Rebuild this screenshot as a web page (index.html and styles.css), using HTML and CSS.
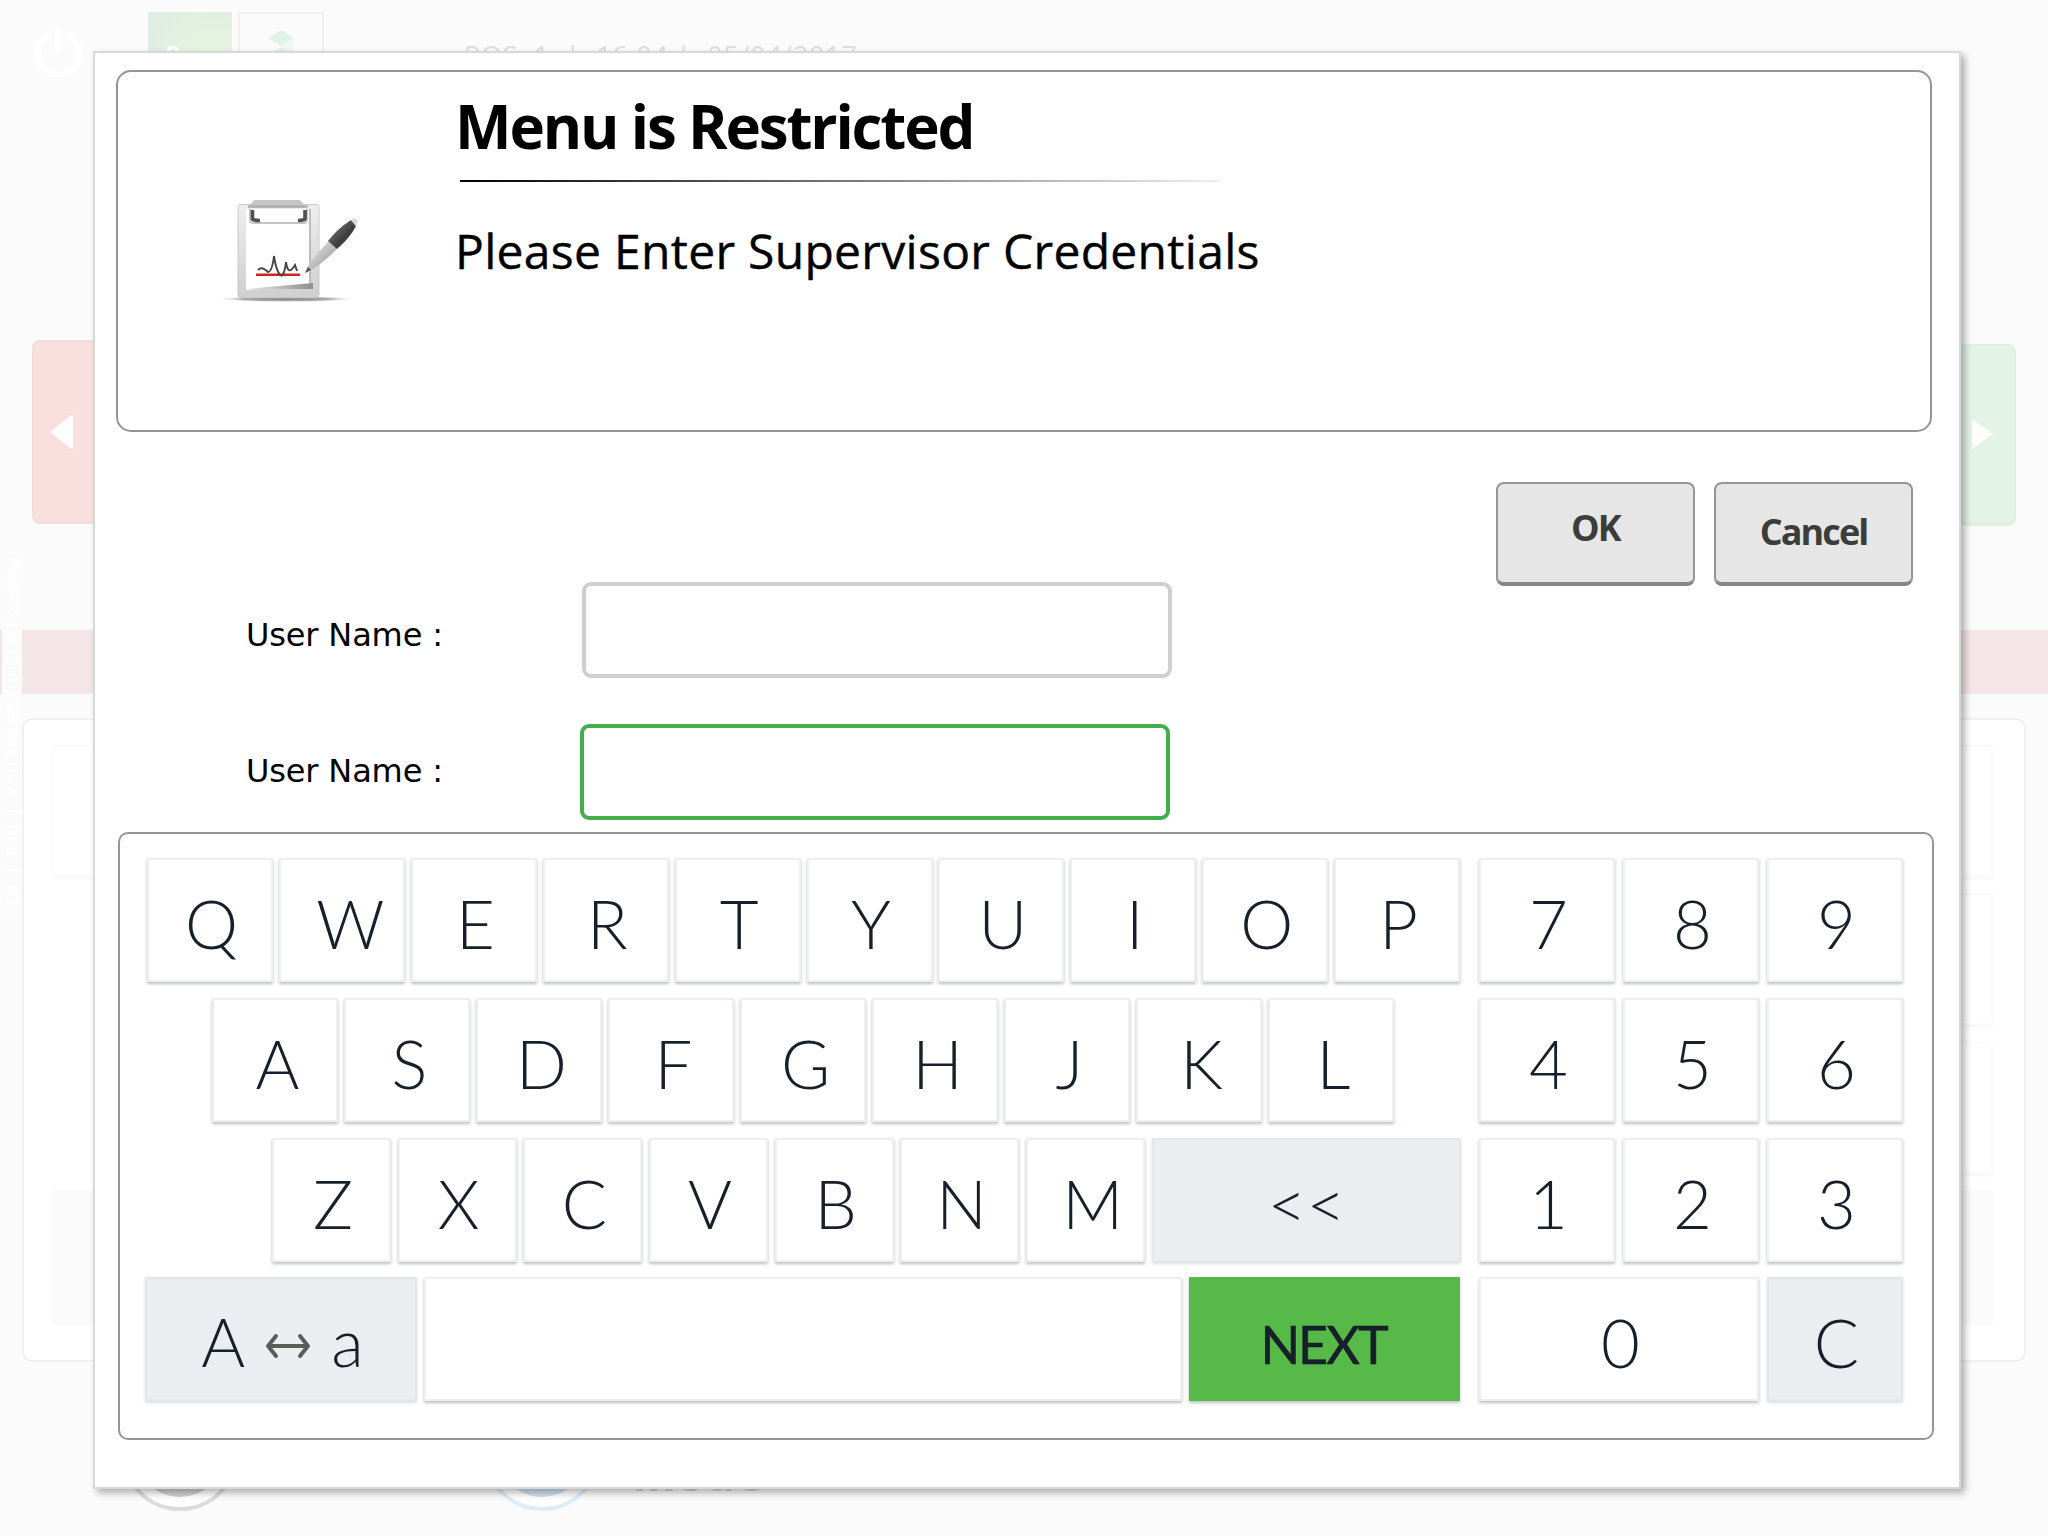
FILE: index.html
```html
<!DOCTYPE html>
<html lang="en">
<head>
<meta charset="utf-8">
<title>Menu is Restricted</title>
<link rel="stylesheet" href="styles.css">
</head>
<body>
<div class="app">
  <header class="topbar">
    <svg class="power" width="50" height="50" viewBox="0 0 50 50"><path d="M15 9A21 21 0 1 0 35 9M25 3V22" fill="none" stroke="#fff" stroke-width="7" stroke-linecap="round"/></svg>
    <div class="brand brand-green">&amp;<small>me</small></div>
    <div class="brand brand-white"><svg width="30" height="42" viewBox="0 0 30 42"><path d="M15 0L28 8L15 16L2 8Z" fill="#e2f2e7"/><path d="M15 16L28 8V22L15 30Z" fill="#eff8f1"/><path d="M15 17L26 24L15 32L4 24Z" fill="#e2f2e7"/></svg></div>
    <div class="status">POS: 1&nbsp; |&nbsp; 16:04 |&nbsp; 05/04/2017</div>
  </header>
  <nav class="pager">
    <div class="page prev"><svg width="23" height="36" viewBox="0 0 23 36"><path d="M0 18L23 0V36Z" fill="#fff"/></svg></div>
    <div class="page next"><svg width="21" height="30" viewBox="0 0 21 30"><path d="M21 15L0 0V30Z" fill="#fff"/></svg></div>
  </nav>
  <div class="band"></div>
  <main class="panel">
    <div class="tiles"><div class="tile"></div><div class="tile off"></div></div>
    <div class="tiles"><div class="tile"></div><div class="tile"></div><div class="tile"></div><div class="tile off"></div></div>
  </main>
  <footer class="bottombar">
    <svg width="120" height="120" viewBox="0 0 120 120"><circle cx="60" cy="60" r="57" fill="#fff" stroke="#dcdcdc" stroke-width="4"/><circle cx="60" cy="60" r="45" fill="#d2d2d2"/></svg>
    <svg class="blue" width="120" height="120" viewBox="0 0 120 120"><circle cx="60" cy="60" r="57" fill="#fff" stroke="#dcedfa" stroke-width="4"/><circle cx="60" cy="60" r="45" fill="#cfe2f0"/></svg>
    <span class="mode">Mode</span>
  </footer>
  <div class="version">NCR&nbsp; |&nbsp; R10&nbsp; |&nbsp; V 10.100.999&nbsp; |&nbsp; CC# Pending</div>
</div>

<section class="dialog">
  <div class="message">
    <svg class="clipboard" width="150" height="110" viewBox="14 16 150 110">
      <defs>
        <linearGradient id="board" x1="0" y1="0" x2="0" y2="1"><stop offset="0" stop-color="#eeeeee"/><stop offset="1" stop-color="#cfcfcf"/></linearGradient>
        <linearGradient id="curl" x1="0" y1="0" x2="1" y2="0"><stop offset="0" stop-color="#eee"/><stop offset="1" stop-color="#8d8d8d"/></linearGradient>
        <linearGradient id="barrel" x1="0" y1="0" x2="1" y2="1"><stop offset="0" stop-color="#f4f4f4"/><stop offset="1" stop-color="#8a8a8a"/></linearGradient>
        <linearGradient id="grip" x1="0" y1="0" x2="1" y2="1"><stop offset="0" stop-color="#8a8a8a"/><stop offset=".6" stop-color="#3b3b3b"/><stop offset="1" stop-color="#666"/></linearGradient>
        <radialGradient id="ground"><stop offset="0" stop-color="#888"/><stop offset=".6" stop-color="#aaa"/><stop offset="1" stop-color="#fff" stop-opacity="0"/></radialGradient>
      </defs>
      <ellipse cx="86" cy="119" rx="72" ry="3.200" fill="url(#ground)"/>
      <rect x="38" y="24.500" width="81" height="93" rx="3" fill="url(#board)" stroke="#c9c9c9"/>
      <path d="M46 29H110V104L46 110Z" fill="#fff"/>
      <path d="M46 109L113 103V109Z" fill="url(#curl)"/>
      <path d="M110 29V103" stroke="#bdbdbd" stroke-width="2"/>
      <path d="M54 20H100L107 28H48Z" fill="#c6c6c6"/>
      <path d="M48 26.500H108" stroke="#aaa" stroke-width="2"/>
      <path d="M50 29V39Q50 43 54 43H103Q107 43 107 39V29" fill="none" stroke="#c4c4c4" stroke-width="2"/>
      <path d="M52.500 30V39Q53 40.500 60 40.500M105 30V39Q104.500 40.500 98 40.500" fill="none" stroke="#505050" stroke-width="3.600"/>
      <path d="M56 94.700H100" stroke="#d22424" stroke-width="2.400"/>
      <path d="M58 90Q61 87 64 89T68 92Q72 92 74 76Q76 90 80 95Q84 98 86 82Q88 97 95 85L97 91" fill="none" stroke="#444" stroke-width="1.900"/>
      <path d="M105 93L109 84Q118 72 129 61L137 69Q124 82 113 89Z" fill="url(#barrel)"/>
      <path d="M105 93L108 87L111 90Z" fill="#555"/>
      <path d="M128 61Q137 49 151 40L156 46Q150 58 137 69Z" fill="url(#grip)"/>
      <path d="M151 40Q155 37 157 40Q158 43 156 46Z" fill="#d8d8d8"/>
    </svg>
    <div class="copy">
      <h1>Menu is Restricted</h1>
      <div class="rule"></div>
      <p>Please Enter Supervisor Credentials</p>
    </div>
  </div>

  <div class="form">
    <div class="fields">
      <div class="field"><label>User Name :</label><div class="input"></div></div>
      <div class="field active"><label>User Name :</label><div class="input"></div></div>
    </div>
    <div class="actions"><div class="btn ok">OK</div><div class="btn cancel">Cancel</div></div>
  </div>

  <div class="keyboard">
    <div class="letters">
      <div class="row r1"><div class="key">Q</div><div class="key wide-glyph">W</div><div class="key">E</div><div class="key">R</div><div class="key">T</div><div class="key">Y</div><div class="key">U</div><div class="key">I</div><div class="key">O</div><div class="key">P</div></div>
      <div class="row r2"><div class="key">A</div><div class="key">S</div><div class="key">D</div><div class="key">F</div><div class="key">G</div><div class="key">H</div><div class="key">J</div><div class="key">K</div><div class="key">L</div></div>
      <div class="row r3"><div class="key">Z</div><div class="key">X</div><div class="key">C</div><div class="key">V</div><div class="key">B</div><div class="key">N</div><div class="key wide-glyph">M</div><div class="key gray back">&lt;&lt;</div></div>
      <div class="row r4"><div class="key gray shift"><span>A</span><svg width="46" height="32" viewBox="0 0 46 32"><path d="M4 16H42M11 6L3 16L11 26M35 6L43 16L35 26" fill="none" stroke="#5c5c59" stroke-width="4" stroke-linecap="round" stroke-linejoin="round"/></svg><span>a</span></div><div class="key space"></div><div class="key green">NEXT</div></div>
    </div>
    <div class="numpad">
      <div class="key">7</div><div class="key">8</div><div class="key">9</div>
      <div class="key">4</div><div class="key">5</div><div class="key">6</div>
      <div class="key">1</div><div class="key">2</div><div class="key">3</div>
      <div class="key zero">0</div><div class="key gray">C</div>
    </div>
  </div>
</section>
</body>
</html>
```
FILE: styles.css
```css
* { box-sizing: border-box; }
body { margin: 0; width: 2048px; height: 1536px; overflow: hidden; position: relative; background: #fbfbfb; font-family: "Open Sans", sans-serif; }

/* Faded application behind the dialog */
.app { height: 1536px; display: flex; flex-direction: column; overflow: hidden; }
.topbar { height: 340px; display: flex; align-items: flex-start; padding: 12px 0 0 33px; }
.power { margin-top: 15px; }
.brand { height: 84px; overflow: hidden; }
.brand-green { width: 84px; margin-left: 65px; background: radial-gradient(circle at 75% 65%, #eaf6df, #e0eee1 75%); color: #fff; font: 700 32px/92px "Lato", sans-serif; padding-left: 14px; }
.brand-green small { font-size: 22px; }
.brand-white { width: 86px; margin-left: 6px; border: 2px solid #f0f0f0; padding: 16px 26px; }
.status { margin: 26px 0 0 140px; font-size: 27px; line-height: 36px; letter-spacing: .7px; color: #dedede; white-space: nowrap; }
.pager { height: 290px; display: flex; justify-content: space-between; padding: 0 32px; }
.page { width: 150px; border-radius: 8px; display: flex; align-items: center; }
.prev { height: 184px; background: #fadfdf; border: 2px solid #f4dcdc; padding-left: 16px; }
.next { height: 182px; margin-top: 4px; background: #e3f3e5; border: 2px solid #e0efe2; border-bottom-width: 4px; padding-right: 21px; justify-content: flex-end; }
.band { height: 64px; background: #f4e6e6; }
.panel { height: 644px; margin: 24px 22px 0; border: 2px solid #f0f0f0; border-radius: 10px; background: #fff; display: flex; justify-content: space-between; padding: 25px 31px 38px 28px; }
.tiles { display: flex; flex-direction: column; justify-content: space-between; }
.tile { width: 150px; height: 132px; border: 2px solid #fbfbfb; box-shadow: 0 2px 2px #f8f8f8; }
.tile.off { background: #fafafa; }
.bottombar { height: 174px; padding: 30px 0 0 120px; display: flex; align-items: flex-start; }
.bottombar svg { flex: none; }
.blue { margin-left: 242px; }
.mode { margin: 51px 0 0 30px; font: 700 47px/60px "Open Sans", sans-serif; color: #d4d4d4; }
.version { position: absolute; left: 2px; top: 550px; width: 20px; height: 370px; writing-mode: vertical-rl; transform: rotate(180deg); font: 700 18px/20px "Open Sans", sans-serif; letter-spacing: -.35px; color: #fff; background: #fbfbfb; white-space: nowrap; }

/* Dialog */
.dialog { position: absolute; left: 93px; top: 51px; width: 1868px; height: 1438px; background: #fff; border: 2px solid #d5d9dc; box-shadow: 4px 4px 7px rgba(0,0,0,.3); padding: 17px 25px 0 21px; display: flex; flex-direction: column; }
.message { width: 1816px; height: 362px; border: 2px solid #969696; border-radius: 15px; display: flex; }
.clipboard { margin: 124px 0 0 96px; flex: none; }
.copy { margin-left: 91px; }
h1 { margin: 16px 0 0; font-size: 60px; line-height: 76px; font-weight: 700; letter-spacing: -2.15px; color: #000; white-space: nowrap; }
.rule { width: 760px; height: 2px; margin: 16px 0 0 5px; background: linear-gradient(90deg, #000, #f7ebee); }
p { margin: 37px 0 0; font-size: 48px; line-height: 64px; color: #000; letter-spacing: .3px; -webkit-text-stroke: .4px #000; white-space: nowrap; }

.form { height: 400px; display: flex; justify-content: space-between; }
.fields { padding: 150px 0 0 131px; display: flex; flex-direction: column; gap: 46px; }
.field { display: flex; align-items: center; height: 96px; }
label { width: 336px; margin-left: -1px; font: 32px/40px "DejaVu Sans", sans-serif; color: #000; padding-top: 10px; letter-spacing: -.15px; white-space: nowrap; }
.input { width: 590px; height: 96px; border: 4px solid #cfcfcf; border-radius: 9px; }
.active .input { border-color: #43ae4c; margin-left: -2px; }
.active label { padding: 0 0 2px; }
.actions { display: flex; gap: 19px; padding: 50px 21px 0 0; }
.btn { width: 199px; height: 104px; border: 2px solid #969696; border-bottom: 4px solid #868686; border-radius: 8px; background: #e6e6e6; color: #3b3d3b; font: 700 36px/98px "Open Sans", sans-serif; text-align: center; letter-spacing: -1.9px; }
.ok { line-height: 88px; }
.cancel { line-height: 96px; }

.keyboard { width: 1816px; height: 608px; margin-left: 2px; border: 2px solid #969696; border-radius: 10px; padding: 24px 29px 0 25px; display: flex; justify-content: space-between; }
.letters { width: 1316px; display: flex; flex-direction: column; gap: 15.8px; }
.row { display: flex; height: 124px; gap: 6px; }
.r1 { margin-left: 2px; }
.r1 .key + .key { margin-left: -.1px; }
.r2 { margin-left: 67px; }
.r3 { margin-left: 127px; gap: 6.7px; }
.r4 { gap: 7px; }
.r1 .key, .r2 .key { width: 126px; flex: none; }
.r3 .key { width: 119px; flex: none; }
.key { height: 124px; border: 2px solid #efefef; background: #fff; box-shadow: 0 2px 3px #b9c1c7; color: #17202a; font: 300 67px/126px "Lato", sans-serif; display: flex; justify-content: center; padding-left: 3px; }
.r2 .key { padding-left: 5px; }
.key.wide-glyph { padding-left: 17px; }
.r3 .key.wide-glyph { padding-left: 14px; }
.key.gray { background: #eaeef1; border-color: #e3e7ea; box-shadow: 0 2px 3px #dcdfe2; }
.r3 .key.back { width: auto; flex: 1; padding: 0; }
.shift { width: 272px; align-items: center; gap: 20px; padding-top: 4px; }
.shift svg { margin-top: 9px; }
.space { width: 758px; }
.key.green { width: 271px; border-color: #56b948; background: #56b948; font-weight: 400; font-size: 52px; line-height: 130px; letter-spacing: -2px; padding: 0 2px 0 0; -webkit-text-stroke: .6px #17202a; }
.numpad { width: 424px; display: grid; grid-template-columns: 136px 136px 136px; column-gap: 8px; row-gap: 15.8px; align-content: start; }
.zero { grid-column: span 2; }
```
